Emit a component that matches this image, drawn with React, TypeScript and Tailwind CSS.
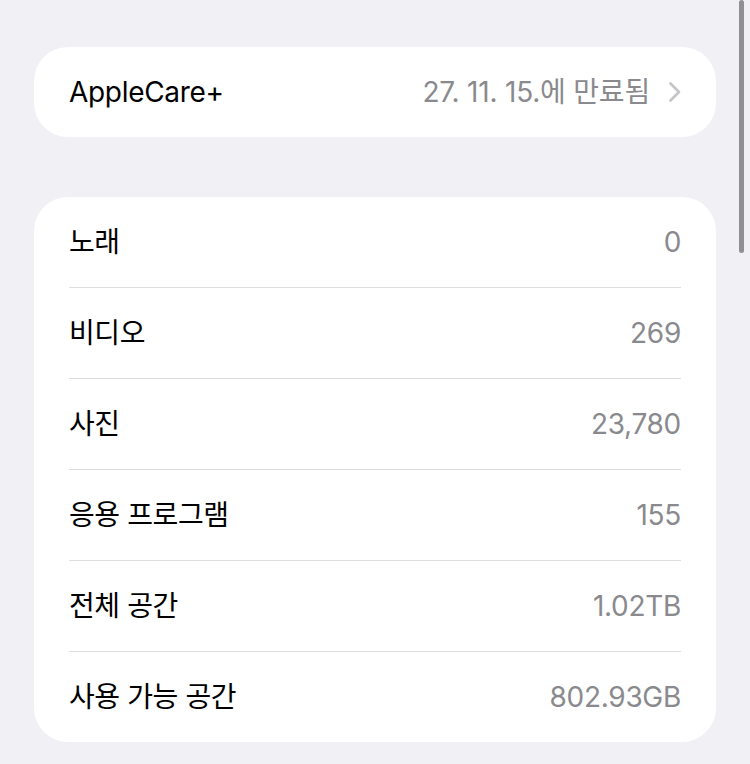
import React from "react";

const rows: [string, string][] = [
  ["노래", "0"],
  ["비디오", "269"],
  ["사진", "23,780"],
  ["응용 프로그램", "155"],
  ["전체 공간", "1.02TB"],
  ["사용 가능 공간", "802.93GB"],
];

export default function App() {
  return (
    <div
      className="relative w-[750px] h-[764px] overflow-hidden bg-[#f1f0f5] px-[34px] pt-[47px]"
      style={{ fontFamily: '"Inter", "Noto Sans CJK KR", sans-serif' }}
    >
      <div className="flex h-[90px] items-center justify-between rounded-[34px] bg-white pl-[35px] pr-[35px]">
        <span className="text-[28px] tracking-[-0.3px] text-black">AppleCare+</span>
        <div className="flex items-center gap-[18px]">
          <span className="text-[28px] tracking-[-0.2px] text-[#8a8a8e]">27. 11. 15.에 만료됨</span>
          <svg width="13" height="22" viewBox="0 0 13 22" fill="none">
            <path d="M2.5 2.5l8.5 8.5-8.5 8.5" stroke="#c4c4c8" strokeWidth="2.6" strokeLinecap="round" strokeLinejoin="round" />
          </svg>
        </div>
      </div>

      <div className="mt-[60px] rounded-[34px] bg-white pl-[35px] pr-[35px]">
        {rows.map(([label, value], i) => (
          <div key={label}>
            {i > 0 && <div className="h-px bg-[#dedee2]" />}
            <div className="flex h-[90px] items-center justify-between">
              <span className="text-[28px] tracking-[-0.4px] text-black">{label}</span>
              <span className="text-[28px] tracking-[-0.3px] text-[#8a8a8e]">{value}</span>
            </div>
          </div>
        ))}
      </div>

      <div className="absolute right-[6px] top-0 h-[253px] w-[5px] rounded-full bg-[#909094]" />
    </div>
  );
}
